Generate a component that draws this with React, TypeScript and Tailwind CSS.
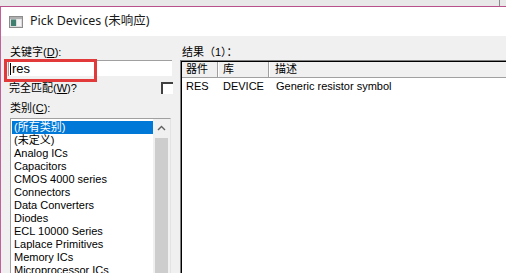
import React from "react";

const cats = [
  "(所有类别)",
  "(未定义)",
  "Analog ICs",
  "Capacitors",
  "CMOS 4000 series",
  "Connectors",
  "Data Converters",
  "Diodes",
  "ECL 10000 Series",
  "Laplace Primitives",
  "Memory ICs",
  "Microprocessor ICs",
];

export default function App() {
  return (
    <div className="relative w-[506px] h-[273px] overflow-hidden flex flex-col bg-[#f0f0f0] text-black font-['Liberation_Sans','Noto_Sans_CJK_SC',sans-serif] text-[11px]">
      {/* top strip */}
      <div className="h-[6px] bg-[#e8e8e8] flex justify-end shrink-0">
        <div className="w-px h-full bg-[#8a8a8a] mr-[6px]" />
      </div>
      <div className="h-px bg-[#b8508a] shrink-0" />
      <div className="flex flex-1 min-h-0">
        <div className="w-px bg-[#c2609a] shrink-0" />
        <div className="flex-1 flex flex-col min-w-0">
          {/* title bar */}
          <div className="h-[29px] bg-white flex items-center pl-[8px] shrink-0">
            <svg width="14" height="12" viewBox="0 0 14 12" className="shrink-0">
              <rect x="0.5" y="0.5" width="13" height="11" fill="#dcdcdc" stroke="#8c8c8c" />
              <rect x="1" y="1" width="12" height="2" fill="#b0b0b0" />
              <rect x="2" y="3.5" width="5" height="6.5" fill="#3f7f70" />
              <rect x="8" y="3.5" width="4" height="6.5" fill="#f4f4f4" />
            </svg>
            <span className="ml-[7px] text-[12.5px] leading-none font-['Noto_Sans','Noto_Sans_CJK_SC',sans-serif] text-[#1a1a1a]">
              Pick Devices (未响应)
            </span>
          </div>
          {/* body */}
          <div className="flex-1 flex min-h-0">
            {/* left column */}
            <div className="w-[179px] shrink-0 flex flex-col">
              <div className="ml-[9px] mt-[9px] h-[14px] leading-[14px]">
                关键字(<span className="underline">D</span>):
              </div>
              <div className="ml-[7px] mt-[1px] w-[164px] h-[16px] bg-white border-t border-l border-[#a0a0a0] flex items-center">
                <div className="ml-[1px] w-px h-[12px] bg-black" />
                <span className="ml-[1px] text-[13px] leading-none">res</span>
              </div>
              <div className="ml-[8px] mt-[5px] w-[164px] h-[14px] flex items-center justify-between">
                <span className="leading-[14px]">
                  完全匹配(<span className="underline">W</span>)?
                </span>
                <div className="w-[12px] h-[12px] bg-white border-t-2 border-l-2 border-t-[#404040] border-l-[#404040]" />
              </div>
              <div className="ml-[9px] mt-[6px] h-[14px] leading-[14px]">
                类别(<span className="underline">C</span>):
              </div>
              <div className="ml-[9px] mt-[3px] w-[161px] flex-1 min-h-0 bg-white border-t border-l border-r border-t-[#a0a0a0] border-l-[#a0a0a0] border-r-[#e3e3e3] flex overflow-hidden">
                <div className="flex-1 pt-[2px] overflow-hidden">
                  {cats.map((c, i) => (
                    <div
                      key={c}
                      className={
                        i === 0
                          ? "ml-px h-[13px] leading-[13px] pl-[2px] bg-[#0078d7] text-white whitespace-nowrap"
                          : "ml-px h-[13px] leading-[13px] pl-[2px] whitespace-nowrap"
                      }
                    >
                      {c}
                    </div>
                  ))}
                </div>
                <div className="w-[17px] bg-[#f0f0f0] flex flex-col shrink-0">
                  <div className="h-[17px] flex items-center justify-center">
                    <svg width="9" height="6" viewBox="0 0 9 6">
                      <polyline points="1,5 4.5,1.5 8,5" fill="none" stroke="#606060" strokeWidth="1.4" />
                    </svg>
                  </div>
                  <div className="mt-[2px] mx-[2px] flex-1 bg-[#cdcdcd]" />
                </div>
              </div>
            </div>
            {/* right column */}
            <div className="flex-1 flex flex-col min-w-0">
              <div className="ml-[2px] mt-[9px] h-[14px] leading-[14px] whitespace-nowrap">结果（1）：</div>
              <div className="mt-[1px] flex-1 border-t border-l border-[#808080]">
                <div className="h-full border-t border-l border-black bg-white flex flex-col">
                  <div className="h-[16px] bg-[#f0f0f0] border-b border-[#a0a0a0] flex shrink-0 leading-[15px]">
                    <div className="w-[36px] pl-[4px] border-r border-[#a0a0a0]">器件</div>
                    <div className="w-[51px] pl-[4px] border-l border-white border-r border-r-[#a0a0a0]">库</div>
                    <div className="flex-1 pl-[5px] border-l border-white">描述</div>
                  </div>
                  <div className="h-[17px] flex items-center whitespace-nowrap">
                    <div className="w-[36px] pl-[4px]">RES</div>
                    <div className="w-[51px] pl-[5px]">DEVICE</div>
                    <div className="flex-1 pl-[7px]">Generic resistor symbol</div>
                  </div>
                </div>
              </div>
            </div>
          </div>
        </div>
      </div>
      {/* red highlight box */}
      <div className="absolute left-[4px] top-[59px] w-[93px] h-[23px] border-[3px] border-[#e23a3a]" />
    </div>
  );
}
